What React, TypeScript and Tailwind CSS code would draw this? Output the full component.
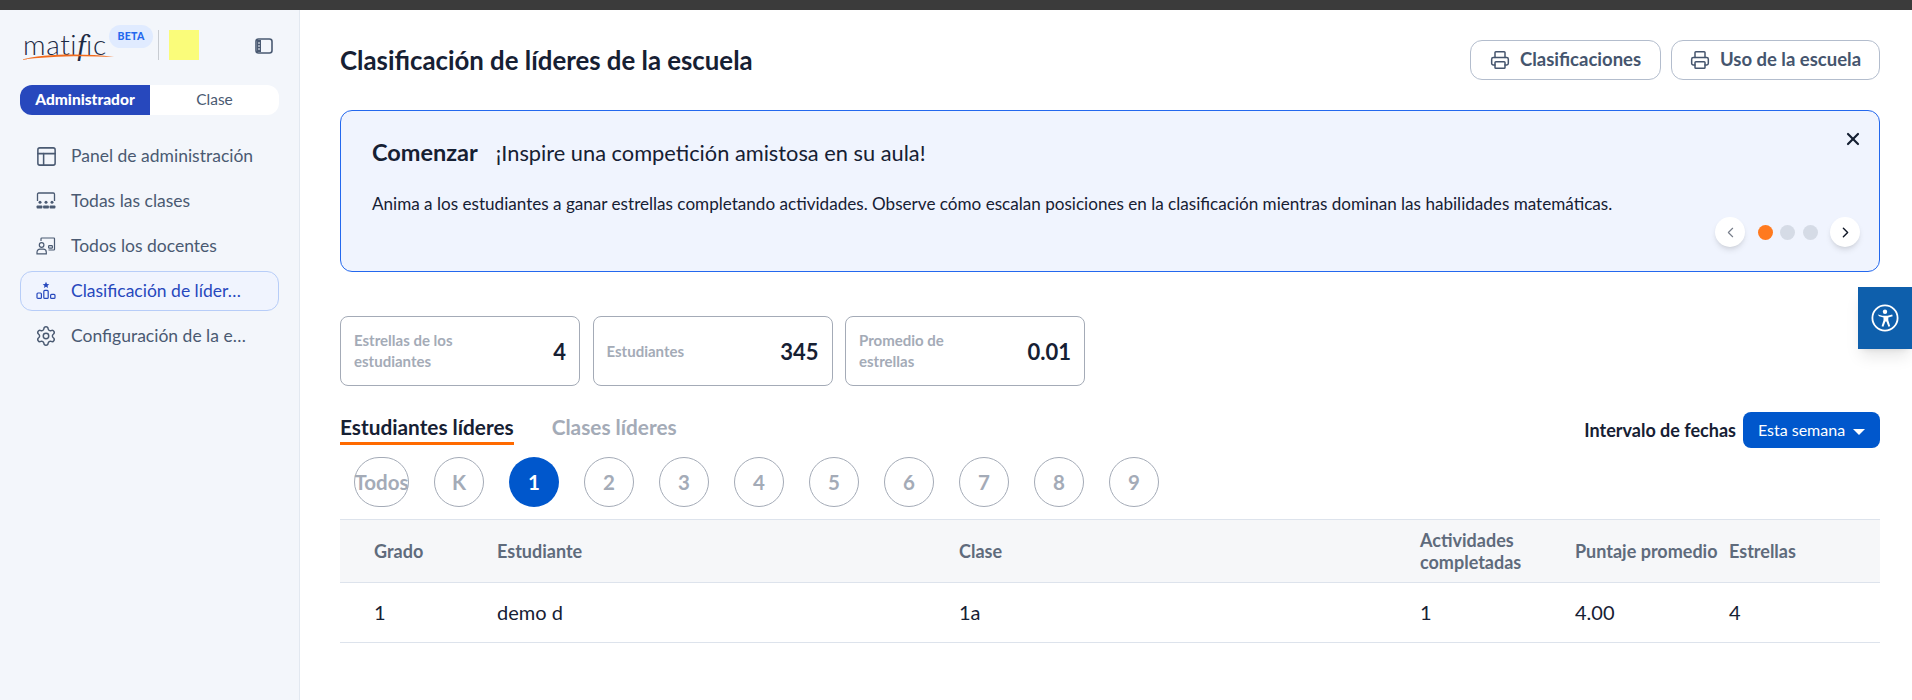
import { ChevronLeft, ChevronRight, PanelsTopLeft, Printer, Settings, X } from 'lucide-react';
import type { ReactNode } from 'react';

function ClassesIcon() {
  return (
    <svg viewBox="0 0 20 20" className="w-5 h-5 text-[#4a5a72]" fill="currentColor">
      <path d="M1.5 10V3.2C1.5 2.5 2 2 2.7 2h14.6c.7 0 1.2.5 1.2 1.2V10" fill="none" stroke="currentColor" strokeWidth="1.3" />
      <circle cx="4" cy="11.3" r="1.5" />
      <circle cx="10" cy="11.3" r="1.5" />
      <circle cx="16" cy="11.3" r="1.5" />
      <rect x="0.6" y="14.5" width="5.8" height="3" rx="0.8" />
      <rect x="7.1" y="14.5" width="5.8" height="3" rx="0.8" />
      <rect x="13.6" y="14.5" width="5.8" height="3" rx="0.8" />
    </svg>
  );
}

function TeachersIcon() {
  return (
    <svg viewBox="0 0 20 20" className="w-5 h-5 text-[#4a5a72]" fill="none" stroke="currentColor" strokeWidth="1.2">
      <path d="M5 5V2.8c0-.5.3-.8.8-.8h12c.5 0 .7.3.7.8v10.4c0 .5-.2.8-.7.8h-5.3" />
      <circle cx="5.6" cy="9" r="2.3" />
      <path d="M1 17.8v-1.6c0-1.8 1.3-3 3-3h3.2c1.8 0 3.1 1.2 3.1 3v1.6z" />
      <rect x="12.6" y="9.6" width="3.8" height="2.6" rx="0.8" />
    </svg>
  );
}

function LeadersIcon() {
  return (
    <svg viewBox="0 0 20 20" className="w-5 h-5 text-[#2748bd]" fill="none" stroke="currentColor" strokeWidth="1.2">
      <path d="M10 .8l1 2.2 2.3.2-1.8 1.5.6 2.3-2.1-1.2-2.1 1.2.6-2.3-1.8-1.5L9 3z" fill="currentColor" stroke="none" />
      <rect x="1" y="12" width="4.4" height="5.4" rx="1" />
      <rect x="7.8" y="9.4" width="4.4" height="8" rx="1" />
      <rect x="14.6" y="13.4" width="4.4" height="4" rx="1" />
    </svg>
  );
}

function NavItem({ icon, label, active }: { icon: ReactNode; label: string; active?: boolean }) {
  return (
    <div
      className={`h-10 flex items-center gap-[15px] pl-[15px] rounded-xl border ${
        active ? 'bg-[#f0f4fe] border-[#b7cdf8] text-[#2748bd]' : 'border-transparent text-[#4a5a72]'
      }`}
    >
      <span className="w-5 h-5 shrink-0 flex items-center justify-center">{icon}</span>
      <span className="text-[17.5px] whitespace-nowrap">{label}</span>
    </div>
  );
}

function Sidebar() {
  return (
    <aside className="w-[300px] shrink-0 bg-[#f3f6fb] border-r border-[#e2e8f0] px-[20px]">
      <div className="h-[75px] flex items-start relative">
        <div className="relative w-[94px] h-[40px] mt-[19px]">
          <span className="absolute left-[3px] top-[-7px] text-[28px] font-light text-[#1c2a44] tracking-[0.6px]">
            mati<span className="font-['Liberation_Serif',serif] italic text-[30px]">f</span>ic
          </span>
          <svg viewBox="0 0 94 8" className="absolute left-0 top-[24px] w-[94px] h-[8px]">
            <path d="M0 7C22 1 62 0 94 4C62 2.5 28 3 0 7z" fill="#f26b1d" />
          </svg>
        </div>
        <span className="absolute left-[89px] top-[15px] w-[44px] h-[23px] rounded-full bg-[#e0ebff] text-[#2468ee] text-[10.5px] font-black flex items-center justify-center tracking-[0.3px]">
          BETA
        </span>
        <span className="absolute left-[138px] top-[20px] w-px h-[30px] bg-[#c8ccd2]" />
        <span className="absolute left-[149px] top-[20px] w-[30px] h-[30px] bg-[#fafc7a]" />
        <svg viewBox="0 0 20 20" className="absolute left-[234px] top-[26px] w-[20px] h-[20px]" fill="none">
          <rect x="2" y="3" width="16" height="14" rx="2.5" stroke="#4a5a72" strokeWidth="1.6" />
          <path d="M3 4h4v12H3z" fill="#4a5a72" />
          <path d="M4 7h2M4 10h2M4 13h2" stroke="#f3f6fb" strokeWidth="1" />
        </svg>
      </div>

      <div className="h-[30px] flex rounded-xl overflow-hidden bg-white text-[15.5px] w-[259px]">
        <div className="w-[130px] bg-[#2748bd] text-white font-black flex items-center justify-center">Administrador</div>
        <div className="flex-1 text-[#4a5a72] flex items-center justify-center">Clase</div>
      </div>

      <nav className="mt-[21px] flex flex-col gap-[5px] w-[259px]">
        <NavItem icon={<PanelsTopLeft className="w-[23px] h-[23px] shrink-0" strokeWidth={1.6} />} label="Panel de administración" />
        <NavItem icon={<ClassesIcon />} label="Todas las clases" />
        <NavItem icon={<TeachersIcon />} label="Todos los docentes" />
        <NavItem icon={<LeadersIcon />} label="Clasificación de líder…" active />
        <NavItem icon={<Settings className="w-[22px] h-[22px] shrink-0" strokeWidth={1.6} />} label="Configuración de la e…" />
      </nav>
    </aside>
  );
}

function ReportButton({ label, width }: { label: string; width: string }) {
  return (
    <button className={`${width} h-10 rounded-xl border border-[#b3bdcd] flex items-center justify-center gap-[10px] text-[#45556e] text-[18.5px] font-bold`}>
      <Printer className="w-[20px] h-[20px]" strokeWidth={1.8} />
      {label}
    </button>
  );
}

function StatCard({ label, value }: { label: string; value: string }) {
  return (
    <div className="w-[240px] h-[70px] rounded-lg border border-[#a4abb7] flex items-center justify-between pl-[13px] pr-[13px]">
      <span className="w-[125px] text-[15px] leading-[21px] font-bold text-[#a4abb7]">{label}</span>
      <span className="text-[22px] font-bold text-[#162033]">{value}</span>
    </div>
  );
}

const grades = ['K', '1', '2', '3', '4', '5', '6', '7', '8', '9'];

function App() {
  return (
    <div className="w-[1912px] h-[700px] overflow-hidden flex flex-col bg-white font-['Lato',sans-serif] relative">
      <div className="h-[10px] shrink-0 bg-[#3b3b3b]" />
      <div className="flex-1 flex min-h-0">
        <Sidebar />

        <main className="flex-1 pl-[40px] pr-[32px]">
          <div className="h-[70px] pt-[30px] flex items-center justify-between">
            <h1 className="text-[25.8px] font-bold text-[#162033]">Clasificación de líderes de la escuela</h1>
            <div className="flex gap-[10px]">
              <ReportButton label="Clasificaciones" width="w-[191px]" />
              <ReportButton label="Uso de la escuela" width="w-[209px]" />
            </div>
          </div>

          <section className="relative mt-[30px] h-[162px] rounded-xl border border-[#2468ee] bg-[#f0f4fe] pl-[31px] pt-[24px]">
            <div className="flex items-baseline gap-[18px] text-[#162033]">
              <span className="text-[23.5px] font-bold">Comenzar</span>
              <span className="text-[21.8px]">¡Inspire una competición amistosa en su aula!</span>
            </div>
            <p className="mt-[21px] text-[17.1px] text-[#162033]">
              Anima a los estudiantes a ganar estrellas completando actividades. Observe cómo escalan posiciones en la clasificación mientras dominan las habilidades matemáticas.
            </p>
            <X className="absolute right-[16px] top-[18px] w-[20px] h-[20px] text-[#162033]" strokeWidth={2.6} />
            <div className="absolute right-[19px] bottom-[24px] flex items-center">
              <span className="w-[30px] h-[30px] rounded-full bg-white shadow-md flex items-center justify-center text-[#777e8a]">
                <ChevronLeft className="w-[17px] h-[17px]" strokeWidth={1.6} />
              </span>
              <span className="ml-[13px] w-[15px] h-[15px] rounded-full bg-[#ff7a1f]" />
              <span className="ml-[7px] w-[15px] h-[15px] rounded-full bg-[#d5dbe6]" />
              <span className="ml-[8px] w-[15px] h-[15px] rounded-full bg-[#d5dbe6]" />
              <span className="ml-[12px] w-[30px] h-[30px] rounded-full bg-white shadow-md flex items-center justify-center text-[#111827]">
                <ChevronRight className="w-[17px] h-[17px]" strokeWidth={2} />
              </span>
            </div>
          </section>

          <div className="mt-[44px] flex gap-[12.5px]">
            <StatCard label="Estrellas de los estudiantes" value="4" />
            <StatCard label="Estudiantes" value="345" />
            <StatCard label="Promedio de estrellas" value="0.01" />
          </div>

          <div className="mt-[26px] h-[36px] flex items-start justify-between">
            <div className="flex gap-[38px] text-[20.8px] font-bold">
              <span className="h-[33px] leading-[29px] text-[#162033] border-b-[3px] border-[#ff6a00]">Estudiantes líderes</span>
              <span className="leading-[29px] text-[#a4abb7]">Clases líderes</span>
            </div>
            <div className="flex items-center gap-[7px]">
              <span className="text-[18px] font-bold text-[#162033]">Intervalo de fechas</span>
              <button className="w-[137px] h-[36px] rounded-lg bg-[#0057cc] text-white text-[16px] flex items-center justify-center gap-[8px]">
                Esta semana
                <span className="mt-[3px] border-x-[6px] border-t-[6px] border-x-transparent border-t-white" />
              </button>
            </div>
          </div>

          <div className="mt-[9px] pl-[14px] flex gap-[25px]">
            <span className="w-[55px] h-[50px] rounded-full border border-[#a4abb7] flex items-center justify-center text-[20.5px] font-bold text-[#a4abb7]">
              Todos
            </span>
            {grades.map(grade => (
              <span
                key={grade}
                className={`w-[50px] h-[50px] rounded-full flex items-center justify-center text-[20.5px] font-bold ${
                  grade === '1' ? 'bg-[#0057cc] text-white' : 'border border-[#a4abb7] text-[#a4abb7]'
                }`}
              >
                {grade}
              </span>
            ))}
          </div>

          <table className="mt-[12px] w-[1540px] table-fixed border-collapse text-left">
            <colgroup>
              <col className="w-[157px]" />
              <col className="w-[462px]" />
              <col className="w-[461px]" />
              <col className="w-[155px]" />
              <col className="w-[154px]" />
              <col />
            </colgroup>
            <thead>
              <tr className="h-[63px] bg-[#f6f7f9] border-y border-[#dde3ec] text-[18px] text-[#5f6b7c] leading-[22px]">
                <th className="pl-[34px] font-bold">Grado</th>
                <th className="font-bold">Estudiante</th>
                <th className="font-bold">Clase</th>
                <th className="font-bold">Actividades completadas</th>
                <th className="font-bold">Puntaje promedio</th>
                <th className="font-bold">Estrellas</th>
              </tr>
            </thead>
            <tbody>
              <tr className="h-[60px] border-b border-[#dde3ec] text-[20px] text-[#162033]">
                <td className="pl-[34px] pb-[2px]">1</td>
                <td className="pb-[2px]">demo d</td>
                <td className="pb-[2px]">1a</td>
                <td className="pb-[2px]">1</td>
                <td className="pb-[2px]">4.00</td>
                <td className="pb-[2px]">4</td>
              </tr>
            </tbody>
          </table>
        </main>
      </div>

      <div className="absolute right-0 top-[287px] w-[54px] h-[62px] bg-[#0e5fac] shadow-lg flex items-center justify-center">
        <svg viewBox="0 0 28 28" className="w-[28px] h-[28px]" fill="none">
          <circle cx="14" cy="14" r="12.6" stroke="#fff" strokeWidth="1.8" />
          <circle cx="14" cy="7.8" r="2.2" fill="#fff" />
          <path d="M6.8 10.6l4.6 1.2h5.2l4.6-1.2.5 1.7-4.4 1.3v2.6l1.9 6-1.8.6-2-5.4h-1l-2 5.4-1.8-.6 1.9-6v-2.6l-4.4-1.3z" fill="#fff" />
        </svg>
      </div>
    </div>
  );
}

export default App;
